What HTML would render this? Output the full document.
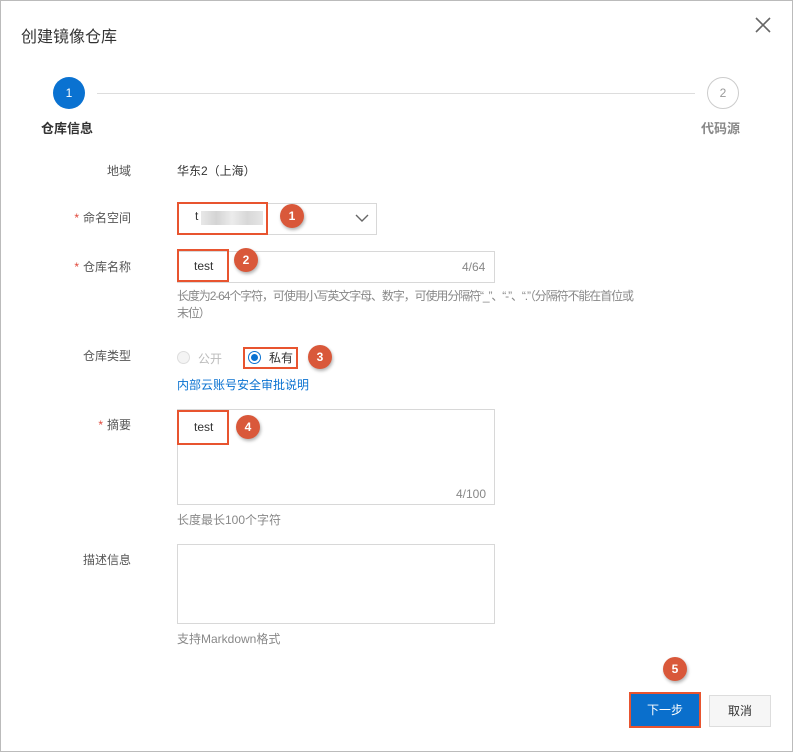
<!DOCTYPE html>
<html><head><meta charset="utf-8"><style>
*{box-sizing:border-box;margin:0;padding:0}
body{width:793px;height:752px;background:#fff;font-family:"Liberation Sans","Noto Sans CJK SC",sans-serif;font-size:12px;color:#333;position:relative;overflow:hidden;border:1px solid #bbb}
.a{position:absolute}
.lbl{position:absolute;text-align:right;width:130px;left:0;color:#555}
.star{color:#e0473a;margin-right:4px}
.inp{position:absolute;border:1px solid #d8d8d8;background:#fff}
.red{position:absolute;border:2px solid #e8542f}
.badge{position:absolute;width:24px;height:24px;border-radius:50%;background:#d9583a;color:#fff;font-weight:bold;font-size:12px;text-align:center;line-height:24px;box-shadow:1px 2px 3px rgba(0,0,0,.3)}
.help{position:absolute;color:#888;font-size:12px}
</style></head><body>
<div class="a" style="left:20px;top:22px;font-size:16px;color:#333">创建镜像仓库</div>
<svg class="a" style="left:754px;top:16px" width="16" height="16"><path d="M1 1L15 15M15 1L1 15" stroke="#666" stroke-width="1.6"/></svg>
<div class="a" style="left:52px;top:76px;width:32px;height:32px;border-radius:50%;background:#0a72d1;color:#fff;text-align:center;line-height:32px">1</div>
<div class="a" style="left:96px;top:92px;width:598px;height:1px;background:#ddd"></div>
<div class="a" style="left:706px;top:76px;width:32px;height:32px;border-radius:50%;border:1px solid #ccc;color:#999;text-align:center;line-height:30px">2</div>
<div class="a" style="left:40px;top:117px;font-size:13px;font-weight:bold;color:#333">仓库信息</div>
<div class="a" style="left:700px;top:117px;font-size:13px;font-weight:bold;color:#888">代码源</div>

<div class="lbl" style="top:161px">地域</div>
<div class="a" style="left:176px;top:161px">华东2（上海）</div>

<div class="lbl" style="top:208px"><span class="star">*</span>命名空间</div>
<div class="inp" style="left:176px;top:202px;width:200px;height:32px"></div>
<svg class="a" style="left:354px;top:212px" width="14" height="10"><path d="M1 2L7 8L13 2" stroke="#666" stroke-width="1.4" fill="none"/></svg>
<div class="a" style="left:194px;top:208px">t</div>
<div class="a" style="left:200px;top:210px;width:62px;height:14px;background:linear-gradient(90deg,#e8e8e8,#d4d4d4,#ececec,#d8d8d8,#e6e6e6)"></div>
<div class="red" style="left:176px;top:201px;width:91px;height:33px"></div>
<div class="badge" style="left:279px;top:203px">1</div>

<div class="lbl" style="top:257px"><span class="star">*</span>仓库名称</div>
<div class="inp" style="left:176px;top:250px;width:318px;height:32px"></div>
<div class="a" style="left:461px;top:259px;color:#888">4/64</div>
<div class="a" style="left:193px;top:258px">test</div>
<div class="red" style="left:176px;top:248px;width:52px;height:33px"></div>
<div class="badge" style="left:233px;top:247px">2</div>
<div class="help" style="left:176px;top:287px;white-space:nowrap;line-height:17px;letter-spacing:-1.1px">长度为2-64个字符，可使用小写英文字母、数字，可使用分隔符“_”、“-”、“.”（分隔符不能在首位或<br>末位）</div>

<div class="lbl" style="top:346px">仓库类型</div>
<div class="a" style="left:176px;top:350px;width:13px;height:13px;border-radius:50%;border:1px solid #ddd;background:#f4f4f4"></div>
<div class="a" style="left:197px;top:349px;color:#bbb">公开</div>
<div class="a" style="left:247px;top:350px;width:13px;height:13px;border-radius:50%;border:1px solid #0a72d1;background:#fff"><div style="margin:2px;width:7px;height:7px;border-radius:50%;background:#0a72d1"></div></div>
<div class="a" style="left:268px;top:348px">私有</div>
<div class="red" style="left:242px;top:346px;width:55px;height:22px"></div>
<div class="badge" style="left:307px;top:344px">3</div>
<div class="a" style="left:176px;top:375px;color:#0a72d1">内部云账号安全审批说明</div>

<div class="lbl" style="top:415px"><span class="star">*</span>摘要</div>
<div class="inp" style="left:176px;top:408px;width:318px;height:96px"></div>
<div class="a" style="left:455px;top:486px;color:#888">4/100</div>
<div class="a" style="left:193px;top:419px">test</div>
<div class="red" style="left:176px;top:409px;width:52px;height:35px"></div>
<div class="badge" style="left:235px;top:414px">4</div>
<div class="help" style="left:176px;top:510px">长度最长100个字符</div>

<div class="lbl" style="top:550px">描述信息</div>
<div class="inp" style="left:176px;top:543px;width:318px;height:80px"></div>
<div class="help" style="left:176px;top:629px">支持Markdown格式</div>

<div class="badge" style="left:662px;top:656px">5</div>
<div class="a" style="left:628px;top:691px;width:72px;height:36px;border:2px solid #e8542f;background:#0a6fcc;color:#fff;text-align:center;line-height:32px">下一步</div>
<div class="a" style="left:708px;top:694px;width:62px;height:32px;border:1px solid #ddd;background:#f6f6f6;color:#333;text-align:center;line-height:30px">取消</div>
</body></html>
